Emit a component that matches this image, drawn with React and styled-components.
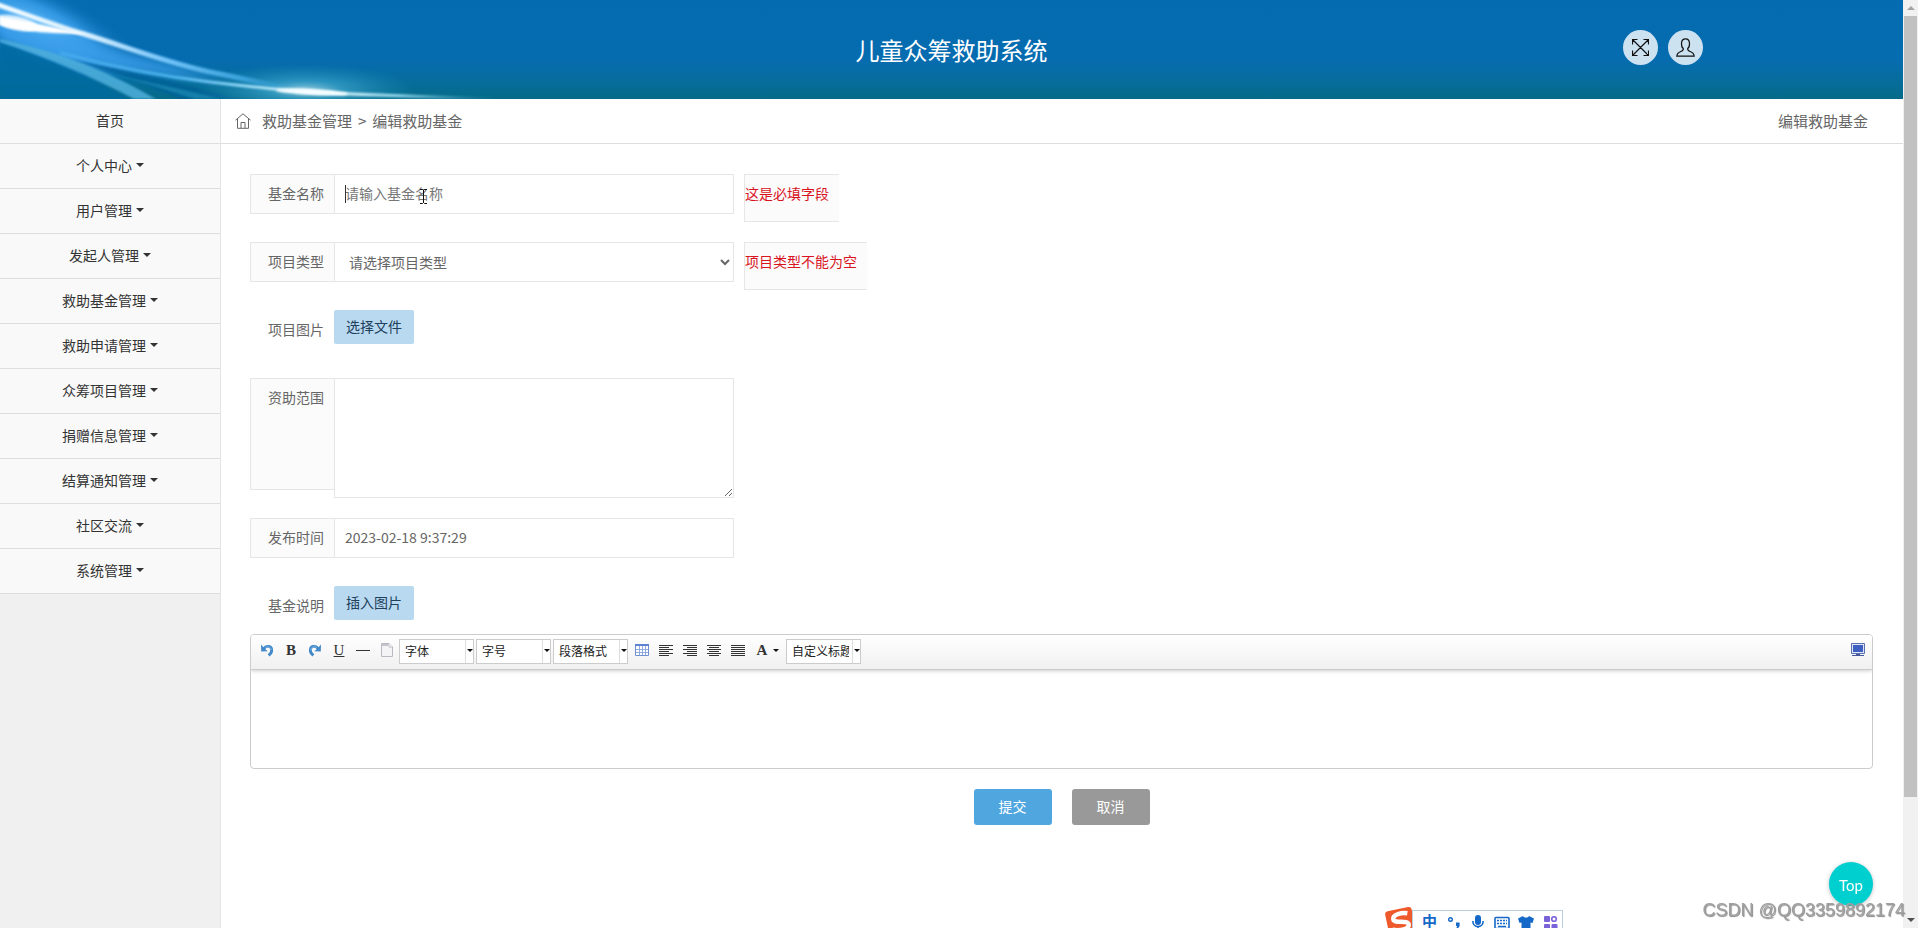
import React from 'react';
import styled, { createGlobalStyle } from 'styled-components';

const menu = [
    '个人中心',
    '用户管理',
    '发起人管理',
    '救助基金管理',
    '救助申请管理',
    '众筹项目管理',
    '捐赠信息管理',
    '结算通知管理',
    '社区交流',
    '系统管理',
];

function Waves() {
    return (
        <WavesSvg width="640" height="99" viewBox="0 0 640 99" aria-hidden="true">
            <defs>
                <radialGradient id="sky">
                    <stop offset="0" stopColor="#62c0ff" />
                    <stop offset="0.5" stopColor="#3a9fec" stopOpacity="0.8" />
                    <stop offset="1" stopColor="#066cb0" stopOpacity="0" />
                </radialGradient>
                <radialGradient id="flare">
                    <stop offset="0" stopColor="#d0f2ff" />
                    <stop offset="0.35" stopColor="#54bde6" stopOpacity="0.7" />
                    <stop offset="1" stopColor="#2a9cc8" stopOpacity="0" />
                </radialGradient>
                <linearGradient id="beam" gradientUnits="userSpaceOnUse" x1="0" y1="0" x2="300" y2="0">
                    <stop offset="0" stopColor="#f2fbff" />
                    <stop offset="0.3" stopColor="#d6efff" />
                    <stop offset="0.55" stopColor="#74c4fa" />
                    <stop offset="0.8" stopColor="#3fa8e2" stopOpacity="0.9" />
                    <stop offset="1" stopColor="#3aa4d8" stopOpacity="0" />
                </linearGradient>
                <linearGradient id="tail" gradientUnits="userSpaceOnUse" x1="0" y1="0" x2="500" y2="0">
                    <stop offset="0" stopColor="#4fb2f2" stopOpacity="0.5" />
                    <stop offset="0.35" stopColor="#4cb4ee" />
                    <stop offset="0.5" stopColor="#9adcf6" />
                    <stop offset="0.62" stopColor="#f4fdff" />
                    <stop offset="0.8" stopColor="#8fd6ea" />
                    <stop offset="1" stopColor="#2690b0" stopOpacity="0" />
                </linearGradient>
                <filter id="soft" x="-20%" y="-50%" width="140%" height="200%">
                    <feGaussianBlur stdDeviation="1" />
                </filter>
                <filter id="haze" x="-20%" y="-50%" width="140%" height="200%">
                    <feGaussianBlur stdDeviation="4" />
                </filter>
            </defs>
            <ellipse cx="36" cy="26" rx="120" ry="40" fill="url(#sky)" transform="rotate(24 36 26)" />
            <path d="M0 26 L60 34 L130 54 L230 82 L120 70 L0 40 Z" fill="#3b9eea" opacity="0.8" filter="url(#haze)" />
            <path d="M0 42 C50 58 90 78 130 99 L0 99 Z" fill="#056a9f" opacity="0.8" filter="url(#soft)" />
            <path d="M70 60 C130 70 180 84 240 99 L180 99 C140 82 110 70 70 60 Z" fill="#045f96" opacity="0.7" filter="url(#soft)" />
            <path d="M90 70 C130 78 170 86 220 99 L195 99 C160 88 130 78 90 70 Z" fill="#1f8cb4" opacity="0.7" filter="url(#soft)" />
            <ellipse cx="305" cy="90" rx="110" ry="26" fill="url(#flare)" opacity="0.7" />
            <path d="M0 42 C50 58 90 76 134 99 L156 99 C116 76 70 54 0 39 Z" fill="#4fb0dc" opacity="0.85" filter="url(#soft)" />
            <path
                d="M60 53 C110 66 160 76 210 82 S290 91 330 93 S430 97 500 99"
                fill="none"
                stroke="url(#tail)"
                strokeWidth="3"
                filter="url(#soft)"
            />
            <path
                d="M-4 4 C30 16 60 27 84 34 C130 48 170 64 215 73 S280 87 310 92"
                fill="none"
                stroke="url(#beam)"
                strokeWidth="5"
                filter="url(#soft)"
            />
            <path d="M0 17 C20 20 50 26 86 34 C60 34 20 32 0 25 Z" fill="#fff" filter="url(#soft)" />
            <ellipse cx="16" cy="23" rx="22" ry="7" fill="#fff" opacity="0.8" filter="url(#soft)" transform="rotate(12 16 23)" />
            <ellipse cx="312" cy="92" rx="36" ry="3" fill="#f4fdff" filter="url(#soft)" transform="rotate(3 312 92)" />
        </WavesSvg>
    );
}

function HomeIcon() {
    return (
        <svg width="16" height="16" viewBox="0 0 16 16" fill="none" stroke="#666">
            <path d="M0.5 7.2 8 0.8 15.5 7.2M2.5 6V15.3H13.5V6M6 15V9.5H10V15" />
        </svg>
    );
}

function ExpandIcon() {
    return (
        <svg width="17" height="17" viewBox="0 0 17 17" fill="none" stroke="#111" strokeWidth="1.2">
            <path d="M1 1 16 16M16 1 1 16M0.5 5.5V0.5H5.5M11.5 0.5H16.5V5.5M16.5 11.5V16.5H11.5M5.5 16.5H0.5V11.5" />
        </svg>
    );
}

function UserIcon() {
    return (
        <svg width="19" height="19" viewBox="0 0 19 19" fill="none" stroke="#111" strokeWidth="1.2">
            <path d="M7.3 10.6C5.7 9.5 5.4 7.5 5.5 5.2 5.6 2.4 7.2 0.8 9.5 0.8S13.4 2.4 13.5 5.2C13.6 7.5 13.3 9.5 11.7 10.6 11.5 12 12.2 12.8 14.2 13.5 16.6 14.4 18 15.6 18.2 18.2H0.8C1 15.6 2.4 14.4 4.8 13.5 6.8 12.8 7.5 12 7.3 10.6Z" />
        </svg>
    );
}

function UndoIcon({ flip }) {
    return (
        <svg width="14" height="14" viewBox="0 0 14 14">
            <g transform={flip ? 'matrix(-1 0 0 1 14 0)' : undefined}>
                <path d="M4.2 5.2C6.8 2.2 11.4 3 11.7 6.8 11.9 9.4 10.5 11 8.6 12.4" fill="none" stroke="#4389c9" strokeWidth="2.8" />
                <path d="M4.6 5C7 3 10.8 3.6 11.4 7" fill="none" stroke="#7cb8e8" strokeWidth="1" />
                <path d="M1 1.5 1.2 8.6 7.8 8.2 5.6 6.4 4.9 3.4 3.4 4.2Z" fill="#4389c9" />
            </g>
        </svg>
    );
}

function PageIcon() {
    return (
        <svg width="14" height="16" viewBox="0 0 14 16">
            <path d="M1.5 1.5H9L12.5 5V14.5H1.5Z" fill="#f4f4f6" stroke="#b9b9c2" />
            <path d="M9 1.5V5H12.5" fill="#fff" stroke="#b9b9c2" />
            <path d="M2 3H8" stroke="#c4c4cc" strokeWidth="2" />
        </svg>
    );
}

function TableIcon() {
    return (
        <svg width="14" height="12" viewBox="0 0 14 12">
            <path d="M0.5 0.5H13.5V11.5H0.5Z" fill="#fff" stroke="#6f8fd0" />
            <path d="M0 0H14V2H0Z" fill="#5f83d2" />
            <path d="M1 5.5H13M1 8.5H13M4.5 2V11M7.5 2V11M10.5 2V11" stroke="#8fabdf" />
        </svg>
    );
}

const alignLines = {
    left: 'M0 .5H14M0 2.5H10M0 4.5H14M0 6.5H10M0 8.5H14M0 10.5H10',
    right: 'M0 .5H14M4 2.5H14M0 4.5H14M4 6.5H14M0 8.5H14M4 10.5H14',
    center: 'M0 .5H14M2 2.5H12M0 4.5H14M2 6.5H12M0 8.5H14M2 10.5H12',
    justify: 'M0 .5H14M0 2.5H14M0 4.5H14M0 6.5H14M0 8.5H14M0 10.5H14',
};

function AlignIcon({ type }) {
    return (
        <svg width="14" height="11" viewBox="0 0 14 11" stroke="#333">
            <path d={alignLines[type]} />
        </svg>
    );
}

function ScreenIcon() {
    return (
        <svg width="14" height="14" viewBox="0 0 14 14">
            <path d="M0.5 0.5H13.5V10.5H0.5Z" fill="#dfe6f6" stroke="#5a6fae" />
            <path d="M2 2H12V9H2Z" fill="#3c5fc0" />
            <path d="M5 11H9V12H5ZM1 12H13V13H1Z" fill="#44589a" />
        </svg>
    );
}

function Combo({ label }) {
    return (
        <ComboBox>
            <ComboSelect aria-label={label}>
                <option>{label}</option>
            </ComboSelect>
            <ComboArrow>
                <Caret $small />
            </ComboArrow>
        </ComboBox>
    );
}

function Editor() {
    return (
        <EditorBox>
            <Toolbar>
                <Tool type="button" aria-label="撤销"><UndoIcon /></Tool>
                <Tool type="button">B</Tool>
                <Tool type="button" aria-label="重做"><UndoIcon flip /></Tool>
                <Tool type="button" $underline>U</Tool>
                <Tool type="button" aria-label="分隔线"><Rule /></Tool>
                <Tool type="button" aria-label="清空文档"><PageIcon /></Tool>
                <Combo label="字体" />
                <Combo label="字号" />
                <Combo label="段落格式" />
                <Tool type="button" aria-label="插入表格"><TableIcon /></Tool>
                {['left', 'right', 'center', 'justify'].map((type) => (
                    <Tool key={type} type="button" aria-label={type}><AlignIcon type={type} /></Tool>
                ))}
                <Tool type="button" $wide>A<Caret $small /></Tool>
                <Combo label="自定义标题" />
                <Spacer />
                <Tool type="button" aria-label="全屏"><ScreenIcon /></Tool>
            </Toolbar>
            <EditorBody contentEditable suppressContentEditableWarning role="textbox" aria-label="基金说明" />
        </EditorBox>
    );
}

function ImeBar() {
    return (
        <Ime>
            <svg width="32" height="32" viewBox="0 0 32 32">
                <g transform="rotate(-12 16 16)">
                    <rect x="3" y="3" width="27" height="27" rx="3" fill="#ee5a2b" />
                    <path d="M25 9C20 7 10 7 10 12S24 15 24 20 14 25 7 22" fill="none" stroke="#fff" strokeWidth="4.5" />
                </g>
            </svg>
            <ImePanel>
                <ImeText>中</ImeText>
                <svg width="16" height="16" viewBox="0 0 16 16">
                    <circle cx="4.5" cy="4.5" r="1.8" fill="none" stroke="#1468c8" strokeWidth="1.4" />
                    <path d="M10 7.5H13.6V11L11.5 14H10L11.2 11H10Z" fill="#1468c8" />
                </svg>
                <svg width="16" height="16" viewBox="0 0 16 16">
                    <rect x="5" y="0" width="6" height="10" rx="3" fill="#1468c8" />
                    <path d="M2.8 6C3 13.5 13 13.5 13.2 6M8 12V15M5 15H11" fill="none" stroke="#1468c8" strokeWidth="1.6" />
                </svg>
                <svg width="16" height="16" viewBox="0 0 16 16">
                    <rect x="1" y="2.5" width="14" height="11" rx="1" fill="#fff" stroke="#1468c8" strokeWidth="1.6" />
                    <path d="M3 5.5H13M3 8.5H13" stroke="#1468c8" strokeWidth="1.6" strokeDasharray="2 1" />
                    <path d="M4 11.5H12" stroke="#1468c8" strokeWidth="1.4" />
                </svg>
                <svg width="16" height="16" viewBox="0 0 16 16">
                    <path d="M5 1C6 3 10 3 11 1L16 3.5 14.5 8 12.5 7.5V15H3.5V7.5L1.5 8 0 3.5Z" fill="#1468c8" />
                </svg>
                <svg width="16" height="16" viewBox="0 0 16 16" fill="#7a62d8">
                    <rect x="2" y="1" width="6" height="6" rx="1" />
                    <circle cx="12" cy="4" r="2.3" fill="none" stroke="#7a62d8" strokeWidth="1.6" />
                    <rect x="2" y="9" width="6" height="6" rx="1" />
                    <rect x="9.5" y="9" width="6" height="6" rx="1" />
                </svg>
            </ImePanel>
        </Ime>
    );
}

export default function App() {
    return (
        <Shell>
            <GlobalStyle />
            <Page>
                <Header>
                    <Waves />
                    <Title>儿童众筹救助系统</Title>
                    <HeaderActions>
                        <RoundButton type="button" aria-label="全屏"><ExpandIcon /></RoundButton>
                        <RoundButton type="button" aria-label="用户"><UserIcon /></RoundButton>
                    </HeaderActions>
                </Header>
                <Columns>
                    <Sidebar>
                        <MenuLink href="#home">首页</MenuLink>
                        {menu.map((name) => (
                            <MenuLink key={name} href={`#${name}`}>
                                {name}
                                <Caret />
                            </MenuLink>
                        ))}
                    </Sidebar>
                    <Main>
                        <Crumbs>
                            <HomeIcon />
                            <Path>
                                <span>救助基金管理</span>
                                <span>&gt;</span>
                                <span>编辑救助基金</span>
                            </Path>
                            <span>编辑救助基金</span>
                        </Crumbs>
                        <Form>
                            <Row>
                                <Label htmlFor="name" $boxed>基金名称</Label>
                                <Field>
                                    <Input id="name" placeholder="请输入基金名称" />
                                    <InsertionPoint />
                                    <Pointer width="9" height="15" viewBox="0 0 9 15" fill="none" stroke="#111">
                                        <path d="M1 .5H3.5L4.5 1.5 5.5 .5H8M4.5 1V14M1 14.5H3.5L4.5 13.5 5.5 14.5H8" />
                                    </Pointer>
                                </Field>
                                <ErrorTip>这是必填字段</ErrorTip>
                            </Row>
                            <Row>
                                <Label htmlFor="type" $boxed>项目类型</Label>
                                <Field>
                                    <Select id="type">
                                        <option>请选择项目类型</option>
                                    </Select>
                                </Field>
                                <ErrorTip>项目类型不能为空</ErrorTip>
                            </Row>
                            <Row>
                                <Label as="span">项目图片</Label>
                                <PickButton type="button">选择文件</PickButton>
                            </Row>
                            <Row>
                                <Label htmlFor="scope" $boxed $tall>资助范围</Label>
                                <Field>
                                    <TextArea id="scope" />
                                </Field>
                            </Row>
                            <Row>
                                <Label htmlFor="time" $boxed>发布时间</Label>
                                <Field>
                                    <Input id="time" defaultValue="2023-02-18 9:37:29" />
                                </Field>
                            </Row>
                            <Row $last>
                                <Label as="span">基金说明</Label>
                                <PickButton type="button">插入图片</PickButton>
                            </Row>
                            <Editor />
                            <Actions>
                                <ActionButton type="submit" $color="#50a6df">提交</ActionButton>
                                <ActionButton type="button" $color="#999">取消</ActionButton>
                            </Actions>
                        </Form>
                    </Main>
                </Columns>
            </Page>
            <ScrollTrack>
                <ScrollArrow />
                <ScrollThumb />
                <ScrollArrow $down />
            </ScrollTrack>
            <TopButton type="button">Top</TopButton>
            <ImeBar />
            <Watermark>CSDN @QQ3359892174</Watermark>
        </Shell>
    );
}

const GlobalStyle = createGlobalStyle`
    * {
        box-sizing: border-box;
    }

    body {
        margin: 0;
        background: #fff;
        color: #666;
        font-family: "Noto Sans CJK SC", "Noto Sans", sans-serif;
        font-size: 14px;
        line-height: 20px;
    }

    button, input, select, textarea {
        margin: 0;
        font: inherit;
        color: inherit;
    }

    svg {
        flex: none;
    }
`;

const Shell = styled.div`
    display: flex;
    min-height: 100vh;
`;

const Page = styled.div`
    flex: 1;
    min-width: 0;
    display: flex;
    flex-direction: column;
`;

const Header = styled.header`
    position: relative;
    height: 99px;
    padding-right: 200px;
    display: flex;
    justify-content: flex-end;
    align-items: center;
    overflow: hidden;
    background: linear-gradient(#056bb0 0%, #066cb0 60%, #066d9c 82%, #056a88 100%);
`;

const WavesSvg = styled.svg`
    position: absolute;
    left: 0;
    top: 0;
`;

const Title = styled.h1`
    position: absolute;
    left: 0;
    right: 0;
    margin: 0;
    text-align: center;
    color: #fff;
    font-size: 24px;
    font-weight: 400;
    line-height: 32px;
`;

const HeaderActions = styled.div`
    position: relative;
    display: flex;
    gap: 10px;
    padding-bottom: 5px;
`;

const RoundButton = styled.button`
    width: 35px;
    height: 35px;
    padding: 0;
    display: flex;
    align-items: center;
    justify-content: center;
    border: none;
    border-radius: 50%;
    background: #cde2f1;
`;

const Columns = styled.div`
    flex: 1;
    display: flex;
`;

const Sidebar = styled.nav`
    width: 221px;
    flex: none;
    border-right: 1px solid #e4e4e4;
    background: #f0f0f0;
`;

const MenuLink = styled.a`
    height: 45px;
    padding-bottom: 2px;
    display: flex;
    align-items: center;
    justify-content: center;
    gap: 4px;
    border-bottom: 1px solid #dedede;
    background: #f9f9f9;
    color: #333;
    text-decoration: none;

    &:hover {
        background: #f0f0f0;
    }
`;

const Caret = styled.span`
    border: solid transparent;
    border-width: ${({ $small }) => ($small ? '3px 3px 0' : '4px 4px 0')};
    border-top-color: ${({ $small }) => ($small ? '#111' : '#333')};
`;

const Main = styled.main`
    flex: 1;
    min-width: 0;
`;

const Crumbs = styled.div`
    height: 45px;
    padding: 0 35px 0 14px;
    display: flex;
    align-items: center;
    gap: 11px;
    border-bottom: 1px solid #dedede;
    font-size: 15px;
`;

const Path = styled.span`
    flex: 1;
    display: flex;
    gap: 6px;
`;

const Form = styled.form`
    padding: 30px 30px 0 29px;
`;

const Row = styled.div`
    display: flex;
    align-items: flex-start;
    min-height: 48px;
    margin-bottom: ${({ $last }) => ($last ? '0' : '20px')};
`;

const Label = styled.label`
    width: 84px;
    height: ${({ $tall }) => ($tall ? '112px' : '40px')};
    flex: none;
    padding: 8px 9px 8px 17px;
    border: 1px solid ${({ $boxed }) => ($boxed ? '#e6e6e6' : 'transparent')};
    border-right: none;
    background: ${({ $boxed }) => ($boxed ? '#fbfbfb' : 'none')};
    white-space: nowrap;
`;

const Field = styled.div`
    position: relative;
    width: 400px;
    margin-right: 10px;
    display: flex;
`;

const Input = styled.input`
    width: 100%;
    height: 40px;
    padding: 0 10px 2px;
    border: 1px solid #e6e6e6;
    background: #fff;
    outline: none;

    &::placeholder {
        color: #777;
    }
`;

const Select = styled.select`
    width: 100%;
    height: 40px;
    padding: 0 10px;
    border: 1px solid #e6e6e6;
    border-radius: 0;
    background: #fff;
`;

const TextArea = styled.textarea`
    width: 100%;
    height: 120px;
    padding: 6px 10px;
    border: 1px solid #e6e6e6;
    background: #fff;
    resize: vertical;
`;

const InsertionPoint = styled.span`
    position: absolute;
    left: 11px;
    top: 11px;
    width: 1px;
    height: 18px;
    background: #333;
`;

const Pointer = styled.svg`
    position: absolute;
    left: 85px;
    top: 15px;
`;

const ErrorTip = styled.span`
    height: 48px;
    padding: 8px 10px 0 0;
    border: 1px solid #e6e6e6;
    border-right: none;
    background: #fbfbfb;
    color: #d9141e;
`;

const PickButton = styled.button`
    height: 34px;
    width: 80px;
    padding: 0 0 2px;
    border: none;
    border-radius: 2px;
    background: #b8d9f0;
    color: #20405c;
`;

const EditorBox = styled.div`
    border: 1px solid #ccc;
    border-radius: 4px;
    overflow: hidden;
`;

const Toolbar = styled.div`
    height: 35px;
    padding: 0 2px 4px 4px;
    display: flex;
    align-items: center;
    border-bottom: 1px solid #ccc;
    background: linear-gradient(#fff, #f0f0f0);
    box-shadow: 0 1px 4px rgba(0, 0, 0, 0.2);
`;

const Tool = styled.button`
    width: ${({ $wide }) => ($wide ? '36px' : '24px')};
    height: 22px;
    padding: 0;
    display: flex;
    align-items: center;
    justify-content: center;
    gap: 6px;
    border: none;
    background: none;
    color: #333;
    font-family: "Liberation Serif", serif;
    font-size: 15px;
    font-weight: ${({ $underline }) => ($underline ? '400' : '700')};
    text-decoration: ${({ $underline }) => ($underline ? 'underline' : 'none')};
`;

const Rule = styled.span`
    width: 14px;
    height: 1px;
    background: #333;
`;

const ComboBox = styled.div`
    width: 75px;
    height: 25px;
    margin: 3px 2px 0 0;
    display: flex;
    border: 1px solid #ccc;
    background: #fff;
`;

const ComboSelect = styled.select`
    appearance: none;
    flex: 1;
    min-width: 0;
    padding: 0 3px 2px 5px;
    border: none;
    background: none;
    color: #222;
    font-size: 12px;
    outline: none;
`;

const ComboArrow = styled.span`
    width: 8px;
    padding-bottom: 2px;
    display: flex;
    align-items: center;
    justify-content: center;
    border-left: 1px solid #ddd;
`;

const Spacer = styled.span`
    flex: 1;
`;

const EditorBody = styled.div`
    height: 98px;
    padding: 8px;
    outline: none;
`;

const Actions = styled.div`
    display: flex;
    justify-content: center;
    gap: 20px;
    padding: 20px 0;
`;

const ActionButton = styled.button`
    width: 78px;
    height: 36px;
    padding: 0 0 2px;
    border: none;
    border-radius: 3px;
    background: ${({ $color }) => $color};
    color: #fff;
`;

const ScrollTrack = styled.div`
    width: 15px;
    height: 100vh;
    display: flex;
    flex-direction: column;
    align-items: center;
    background: #f1f1f1;
`;

const ScrollThumb = styled.div`
    flex: 1;
    width: 13px;
    margin-bottom: 115px;
    background: #c1c1c1;
`;

const ScrollArrow = styled.span`
    width: 15px;
    height: 16px;
    display: flex;
    align-items: center;
    justify-content: center;

    &::before {
        content: '';
        border: 4px solid transparent;
        border-top: ${({ $down }) => ($down ? '4px solid #505050' : 'none')};
        border-bottom: ${({ $down }) => ($down ? 'none' : '4px solid #a3a3a3')};
    }
`;

const TopButton = styled.button`
    position: fixed;
    right: 45px;
    bottom: 22px;
    width: 44px;
    height: 44px;
    padding: 2px 0 0;
    border: none;
    border-radius: 50%;
    background: #00cfcf;
    box-shadow: 0 1px 4px rgba(0, 0, 0, 0.25);
    color: #fff;
    font-family: Lato, sans-serif;
    font-size: 15px;
`;

const Ime = styled.div`
    position: fixed;
    right: 355px;
    bottom: -10px;
    display: flex;
    align-items: flex-end;
`;

const ImePanel = styled.div`
    height: 28px;
    margin-left: -4px;
    padding: 4px 4px 0 9px;
    display: flex;
    gap: 8px;
    border: 1px solid #b9cfe0;
    background: #fff;
`;

const ImeText = styled.span`
    width: 16px;
    line-height: 12px;
    font-size: 15px;
    font-weight: 700;
    color: #1468c8;
`;

const Watermark = styled.span`
    position: fixed;
    right: 13px;
    bottom: 8px;
    color: #a0a0a0;
    font-family: "Liberation Sans", sans-serif;
    font-size: 18px;
    text-shadow: 1px 1px 1px #888;
`;
